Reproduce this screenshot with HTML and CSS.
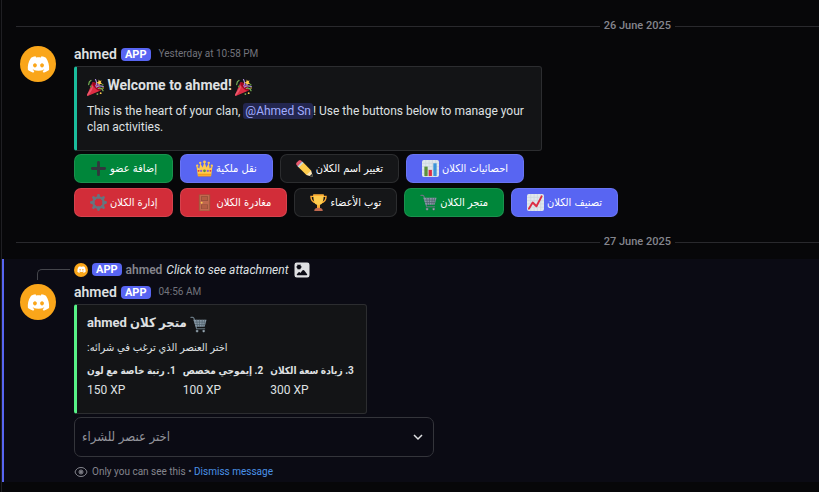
FILE: index.html
```
<!DOCTYPE html>
<html lang="en">
<head>
    <meta charset="UTF-8">
    <meta name="viewport" content="width=device-width, initial-scale=1">
    <title>ahmed</title>
    <link rel="stylesheet" href="styles.css">
</head>
<body>

<!-- Shared icons -->
<svg class="sprite" aria-hidden="true">
    <symbol id="logo" viewBox="0 0 24 24">
        <path fill="#fff" d="M19.73 4.87a18.2 18.2 0 0 0-4.6-1.44c-.21.4-.4.8-.58 1.21-1.69-.25-3.4-.25-5.1 0-.18-.41-.37-.82-.59-1.2-1.6.27-3.14.75-4.6 1.43A19.04 19.04 0 0 0 .96 17.7a18.43 18.43 0 0 0 5.63 2.87c.46-.62.86-1.28 1.2-1.98-.65-.25-1.29-.55-1.9-.92.17-.12.32-.24.47-.37 3.58 1.7 7.7 1.7 11.28 0l.46.37c-.6.36-1.25.67-1.9.92.35.7.75 1.35 1.2 1.98 2.03-.63 3.94-1.6 5.64-2.87.47-4.87-.78-9.09-3.3-12.83ZM8.3 15.12c-1.1 0-2-1.02-2-2.27 0-1.24.88-2.26 2-2.26s2.02 1.02 2 2.26c0 1.25-.89 2.27-2 2.27Zm7.4 0c-1.1 0-2-1.02-2-2.27 0-1.24.88-2.26 2-2.26s2.02 1.02 2 2.26c0 1.25-.88 2.27-2 2.27Z"/>
    </symbol>
    <symbol id="party" viewBox="0 0 36 36">
        <path fill="#DD2E44" d="M11.6 7.6c-.2.2-.3.4-.5.6L.3 33.2c-.4 1.3.9 2.9 2.5 2.5l25-10.8c.2-.1.4-.2.6-.5 1.7-1.7-.7-6.8-5.3-11.5-4.7-4.6-9.8-7-11.5-5.3z"/>
        <path fill="#EA596E" d="M13 12.7L.8 31.6l-.5 1.6c-.3 1.2.6 2.3 1.7 2.5C6 30 13 23 13 12.7z"/>
        <path fill="#A0041E" d="M23 13c4.7 4.7 7 9.7 5.3 11.4-1.6 1.7-6.7-.7-11.4-5.3-4.6-4.7-7-9.8-5.3-11.5 1.7-1.6 6.8.8 11.4 5.4z"/>
        <path fill="none" stroke="#AA8DD8" stroke-width="2.5" stroke-linecap="round" d="M18.5 14.5c3-4 2.500-8-.5-13.300M20 17c4-3.500 8-3 14.500-1"/>
        <path fill="none" stroke="#77B255" stroke-width="2.5" stroke-linecap="round" d="M3.5 12l1.500-6 3.500-3M24 20c4-2 8 0 10 5"/>
        <path fill="#FFCC4D" d="M25 1l2 3 4-1-2 4 3 3-5 1-2 4-1-5-4-2 4-2z"/>
        <circle cx="8" cy="16" r="2" fill="#5C913B"/>
        <circle cx="24" cy="12" r="2" fill="#9266CC"/>
        <circle cx="33" cy="12" r="2" fill="#5C913B"/>
        <circle cx="29" cy="30" r="2" fill="#FFCC4D"/>
        <circle cx="22" cy="32" r="2" fill="#77B255"/>
        <circle cx="34" cy="19" r="1.5" fill="#FFCC4D"/>
    </symbol>
    <symbol id="plus" viewBox="0 0 36 36">
        <path fill="#31373D" d="M31 15H21V5c0-1.700-1.300-3-3-3s-3 1.300-3 3v10H5c-1.700 0-3 1.300-3 3s1.300 3 3 3h10v10c0 1.700 1.300 3 3 3s3-1.300 3-3V21h10c1.700 0 3-1.300 3-3s-1.300-3-3-3z"/>
    </symbol>
    <symbol id="crown" viewBox="0 0 36 36">
        <path fill="#FFCC4D" d="M4 34L1 13l6 5 2-11 5 9 4-12 4 12 5-9 2 11 6-5-3 21z"/>
        <circle cx="18" cy="4" r="3" fill="#FFCC4D"/><circle cx="9" cy="6" r="2.5" fill="#FFCC4D"/>
        <circle cx="27" cy="6" r="2.5" fill="#FFCC4D"/><circle cx="2.5" cy="12" r="2.5" fill="#FFCC4D"/>
        <circle cx="33.5" cy="12" r="2.5" fill="#FFCC4D"/>
        <path fill="#F4900C" d="M4 29h28v2H4zM4 33h28v2H4z"/>
        <circle cx="18" cy="23" r="3" fill="#5C913B"/>
        <circle cx="11" cy="23" r="2.5" fill="#9266CC"/><circle cx="25" cy="23" r="2.5" fill="#9266CC"/>
        <circle cx="5.5" cy="23" r="2" fill="#DD2E44"/><circle cx="30.5" cy="23" r="2" fill="#DD2E44"/>
    </symbol>
    <symbol id="pencil" viewBox="0 0 36 36">
        <path fill="#EA596E" d="M1 6l5-5c2-1.500 5 0 7 2L3 13C1 11-.5 8 1 6z"/>
        <path fill="#CCD6DD" d="M3 13L13 3l4 4L7 17z"/>
        <path fill="#FFCC4D" d="M6 16L16 6l16 16-1 8-9 2z"/>
        <path fill="#FFE8B6" d="M22 32l10-10 4 14z"/>
        <path fill="#292F33" d="M29 34l5-5 2 7z"/>
    </symbol>
    <symbol id="bars" viewBox="0 0 36 36">
        <rect width="36" height="36" rx="4" fill="#E1E8ED"/>
        <path stroke="#CCD6DD" stroke-width="1.5" d="M0 7h36M0 14h36M0 21h36M0 28h36M8 0v36M15 0v36M22 0v36M29 0v36"/>
        <path fill="#5C913B" d="M5 14h7v20H5z"/>
        <path fill="#DD2E44" d="M14 21h7v13h-7z"/>
        <path fill="#3B94D9" d="M24 7h7v27h-7z"/>
    </symbol>
    <symbol id="gear" viewBox="0 0 36 36">
        <circle cx="18" cy="18" r="11" fill="none" stroke="#66757F" stroke-width="5"/>
        <path stroke="#66757F" stroke-width="6" stroke-linecap="round" d="M18 3v4M18 29v4M3 18h4M29 18h4M7.4 7.4l2.6 2.6M26 26l2.6 2.6M28.6 7.4L26 10M10 26l-2.600 2.600"/>
    </symbol>
    <symbol id="door" viewBox="0 0 36 36">
        <path fill="#A0563B" d="M6 1h24v35H6z"/>
        <path fill="#C1694F" d="M8 2h20v33H8z"/>
        <path fill="#854836" d="M11 5h14v10H11zM11 22h14v10H11z"/>
        <path fill="#B35C43" d="M12 6h12v8H12zM12 23h12v8H12z"/>
        <circle cx="12" cy="18.5" r="2" fill="#FFCC4D"/>
    </symbol>
    <symbol id="trophy" viewBox="0 0 36 36">
        <path fill="none" stroke="#FFAC33" stroke-width="3" d="M9 5H2c0 9 4 13 11 14M27 5h7c0 9-4 13-11 14"/>
        <path fill="#FFCC4D" d="M7 1h22c0 12-2 20-8 22v6h-6v-6C9 21 7 13 7 1z"/>
        <path fill="#FFAC33" d="M7 1h22v3H7zM15 24h6v6h-6z"/>
        <path fill="#C1694F" d="M9 36c0-5 3-7 9-7s9 2 9 7z"/>
    </symbol>
    <symbol id="cart" viewBox="0 0 36 36">
        <path fill="none" stroke="#66757F" stroke-width="2.5" stroke-linecap="round" d="M2 3h4c2 0 2 1 3 4l5 20h17"/>
        <path fill="#8899A6" d="M7 8h28l-4 15H12z"/>
        <path stroke="#50606B" stroke-width="1.5" d="M9 13h24M11 18h21M14 8l2 15M20 8v15M26 8l-1 15M31 8l-2 15"/>
        <circle cx="15" cy="32" r="3" fill="#66757F"/><circle cx="29" cy="32" r="3" fill="#66757F"/>
        <circle cx="15" cy="32" r="1.2" fill="#CCD6DD"/><circle cx="29" cy="32" r="1.2" fill="#CCD6DD"/>
    </symbol>
    <symbol id="trend" viewBox="0 0 36 36">
        <rect width="36" height="36" rx="4" fill="#E1E8ED"/>
        <path stroke="#CCD6DD" stroke-width="1.5" d="M0 7h36M0 14h36M0 21h36M0 28h36M8 0v36M15 0v36M22 0v36M29 0v36"/>
        <path fill="none" stroke="#DD2E44" stroke-width="4" stroke-linecap="round" stroke-linejoin="round" d="M4 31l8-13 8 8L31 5"/>
    </symbol>
</svg>

<main class="chat">
    <div class="divider"><span>26 June 2025</span></div>

    <article class="message">
        <div class="avatar"><svg><use href="#logo"/></svg></div>
        <div class="content">
            <header class="meta">
                <span class="author">ahmed</span>
                <span class="tag">APP</span>
                <time>Yesterday at 10:58 PM</time>
            </header>

            <section class="embed embed-welcome">
                <h2><svg class="emoji"><use href="#party"/></svg> Welcome to ahmed! <svg class="emoji"><use href="#party"/></svg></h2>
                <p>This is the heart of your clan, <span class="mention">@Ahmed Sn</span>! Use the buttons below to manage your clan activities.</p>
            </section>

            <div class="actions">
                <div class="action-row">
                    <button type="button" class="btn green"><svg class="emoji"><use href="#plus"/></svg><span>إضافة عضو</span></button>
                    <button type="button" class="btn blue"><svg class="emoji"><use href="#crown"/></svg><span>نقل ملكية</span></button>
                    <button type="button" class="btn gray"><svg class="emoji"><use href="#pencil"/></svg><span>تغيير اسم الكلان</span></button>
                    <button type="button" class="btn blue"><svg class="emoji"><use href="#bars"/></svg><span>احصائيات الكلان</span></button>
                </div>
                <div class="action-row">
                    <button type="button" class="btn red"><svg class="emoji"><use href="#gear"/></svg><span>إدارة الكلان</span></button>
                    <button type="button" class="btn red"><svg class="emoji"><use href="#door"/></svg><span>مغادرة الكلان</span></button>
                    <button type="button" class="btn gray"><svg class="emoji"><use href="#trophy"/></svg><span>توب الأعضاء</span></button>
                    <button type="button" class="btn green"><svg class="emoji"><use href="#cart"/></svg><span>متجر الكلان</span></button>
                    <button type="button" class="btn blue"><svg class="emoji"><use href="#trend"/></svg><span>تصنيف الكلان</span></button>
                </div>
            </div>
        </div>
    </article>

    <div class="divider"><span>27 June 2025</span></div>

    <div class="ephemeral">
        <div class="reply">
            <span class="spine"></span>
            <span class="avatar mini"><svg><use href="#logo"/></svg></span>
            <span class="tag">APP</span>
            <span class="reply-author">ahmed</span>
            <em>Click to see attachment</em>
            <svg class="picture" viewBox="0 0 24 24"><path fill="#dfe0e2" fill-rule="evenodd" d="M2 5a3 3 0 0 1 3-3h14a3 3 0 0 1 3 3v14a3 3 0 0 1-3 3H5a3 3 0 0 1-3-3V5Zm13.35 8.13 3.5 4.67c.37.5.02 1.2-.6 1.2H5.81a.75.75 0 0 1-.59-1.22l1.86-2.32a1.5 1.5 0 0 1 2.34 0l.5.64 2.23-2.97a2 2 0 0 1 3.2 0ZM10.2 5.98c.23-.91-.88-1.55-1.55-.9a.93.93 0 0 1-1.3 0c-.67-.65-1.78-.01-1.55.9a.93.93 0 0 1-.65 1.12c-.9.26-.9 1.54 0 1.8.48.14.77.63.65 1.12-.23.91.88 1.55 1.55.9a.93.93 0 0 1 1.3 0c.67.65 1.78.01 1.55-.9a.93.93 0 0 1 .65-1.12c.9-.26.9-1.54 0-1.8a.93.93 0 0 1-.65-1.12Z"/></svg>
        </div>

        <article class="message">
            <div class="avatar"><svg><use href="#logo"/></svg></div>
            <div class="content">
                <header class="meta">
                    <span class="author">ahmed</span>
                    <span class="tag">APP</span>
                    <time>04:56 AM</time>
                </header>

                <section class="embed embed-shop" dir="rtl">
                    <h2><svg class="emoji"><use href="#cart"/></svg> متجر كلان ahmed</h2>
                    <p>اختر العنصر الذي ترغب في شرائه:</p>
                    <dl class="fields" dir="ltr">
                        <div><dt dir="rtl">1. رتبة خاصة مع لون</dt><dd>150 XP</dd></div>
                        <div><dt dir="rtl">2. إيموجي مخصص</dt><dd>100 XP</dd></div>
                        <div><dt dir="rtl">3. زيادة سعة الكلان</dt><dd>300 XP</dd></div>
                    </dl>
                </section>

                <div class="picker">
                    <select aria-label="اختر عنصر للشراء">
                        <option>اختر عنصر للشراء</option>
                    </select>
                    <svg viewBox="0 0 12 12"><path d="M2 4l4 4 4-4"/></svg>
                </div>

                <footer class="note">
                    <svg viewBox="0 0 14 14"><path d="M1 7c1-3 3-4.500 6-4.500S12 4 13 7c-1 3-3 4.500-6 4.500S2 10 1 7z"/><circle cx="7" cy="7" r="2"/><circle class="dot" cx="7" cy="7" r="1"/></svg>
                    <span>Only you can see this • <a href="#">Dismiss message</a></span>
                </footer>
            </div>
        </article>
    </div>
</main>
</body>
</html>
```

FILE: styles.css
```
* {
    box-sizing: border-box;
}

body {
    margin: 0;
    background-color: #070709;
    color: #dfe0e2;
    font-family: Roboto, "DejaVu Sans Condensed", sans-serif;
    font-size: 12px;
    line-height: 16px;
}

h2, p, dl, dd {
    margin: 0;
}

.sprite {
    position: absolute;
    width: 0;
    height: 0;
}

.chat {
    min-height: 100vh;
    margin-left: 1px;
    padding-top: 18px;
    border-left: 1px solid #1f1f23;
}

/* Date divider */
.divider {
    display: flex;
    align-items: center;
    gap: 4px;
    margin-left: 14px;
    color: #84858d;
    font-size: 11px;
    font-weight: 500;
}

.divider::before,
.divider::after {
    content: "";
    height: 1px;
    background-color: #29292d;
}

.divider::before {
    flex: 1;
}

.divider::after {
    flex: 0 0 144px;
}

/* Messages */
.message {
    display: flex;
    gap: 18px;
    padding: 12px 18px 17px;
}

.avatar {
    display: flex;
    flex: none;
    align-items: center;
    justify-content: center;
    width: 36px;
    height: 36px;
    border-radius: 50%;
    background-color: #faa61a;
}

.avatar svg {
    width: 23px;
    height: 23px;
}

.content {
    flex: 1;
    min-width: 0;
}

.meta {
    display: flex;
    align-items: center;
    gap: 4px;
    height: 16px;
    margin-bottom: 4px;
}

.author {
    font-size: 14px;
    font-weight: 600;
}

.tag {
    padding: 0 4px;
    border-radius: 4px;
    background-color: #5865f2;
    color: #fff;
    font-size: 11px;
    font-weight: 700;
    line-height: 13px;
}

.meta time {
    margin-left: 4px;
    color: #72737b;
    font-size: 10px;
}

/* Embeds */
.embed {
    padding: 10px;
    border: 1px solid #2c2d30;
    border-left: 3px solid #1abc9c;
    border-radius: 3px;
    background-color: #131416;
    text-align: left;
}

.embed h2 {
    margin-bottom: 7px;
    font-size: 14px;
    font-weight: 700;
}

.emoji {
    width: 17px;
    height: 17px;
    vertical-align: -6px;
}

.embed-welcome {
    max-width: 468px;
    min-height: 85px;
}

.embed-shop {
    max-width: 293px;
    min-height: 110px;
    border-left-color: #57f287;
}

.embed-shop h2 {
    font-size: 13px;
}

.embed-shop p {
    font-size: 11px;
}

.mention {
    padding: 1px 2px;
    border-radius: 3px;
    background-color: #23264f;
    color: #a0acff;
}

.fields {
    display: grid;
    grid-template-columns: auto auto auto;
    justify-content: start;
    gap: 7px;
    margin-top: 7px;
    white-space: nowrap;
}

.fields dt {
    margin-bottom: 3px;
    font-size: 10px;
    font-weight: 700;
}

/* Buttons */
.actions {
    display: flex;
    flex-direction: column;
    gap: 5px;
    margin-top: 3px;
}

.action-row {
    display: flex;
    flex-wrap: wrap;
    gap: 7px;
}

.btn {
    display: flex;
    align-items: center;
    gap: 3px;
    height: 29px;
    padding: 0 15px;
    border: 1px solid rgba(255, 255, 255, 0.1);
    border-radius: 7px;
    color: #fff;
    font: 11px/16px "DejaVu Sans Condensed", sans-serif;
    white-space: nowrap;
    cursor: pointer;
}

.green {
    background-color: #00863a;
}

.blue {
    background-color: #5865f2;
}

.gray {
    background-color: #151618;
}

.red {
    background-color: #d22d39;
}

/* Private reply */
.ephemeral {
    margin-top: 9px;
    border-left: 2px solid #5865f2;
    background-color: #0b0b14;
}

.ephemeral .message {
    padding: 4px 16px 2px;
}

.reply {
    display: flex;
    align-items: center;
    gap: 4px;
    height: 21px;
    padding-left: 33px;
}

.spine {
    align-self: flex-end;
    width: 33px;
    height: 11px;
    border-top: 1px solid #45464c;
    border-left: 1px solid #45464c;
    border-top-left-radius: 5px;
}

.mini {
    width: 14px;
    height: 14px;
}

.mini svg {
    width: 9px;
    height: 9px;
}

.reply-author {
    color: #84858d;
    font-weight: 600;
}

.picture {
    width: 18px;
    height: 18px;
}

/* Item picker */
.picker {
    position: relative;
    max-width: 360px;
    margin-top: 3px;
}

.picker select {
    display: block;
    width: 100%;
    height: 40px;
    padding: 0 32px 0 7px;
    border: 1px solid #34353b;
    border-radius: 7px;
    background-color: #0b0b14;
    color: #94959c;
    font: 13px/16px "DejaVu Sans Condensed", sans-serif;
    appearance: none;
}

.picker svg {
    position: absolute;
    top: 14px;
    right: 10px;
    width: 12px;
    height: 12px;
    fill: none;
    stroke: #dfe0e2;
    stroke-width: 1.5;
    pointer-events: none;
}

.note {
    display: flex;
    align-items: center;
    gap: 4px;
    margin-top: 7px;
    color: #84858d;
    font-size: 10px;
}

.note svg {
    width: 14px;
    height: 14px;
    fill: none;
    stroke: #84858d;
}

.note .dot {
    fill: #84858d;
}

.note a {
    color: #4a92e8;
    text-decoration: none;
}
```
